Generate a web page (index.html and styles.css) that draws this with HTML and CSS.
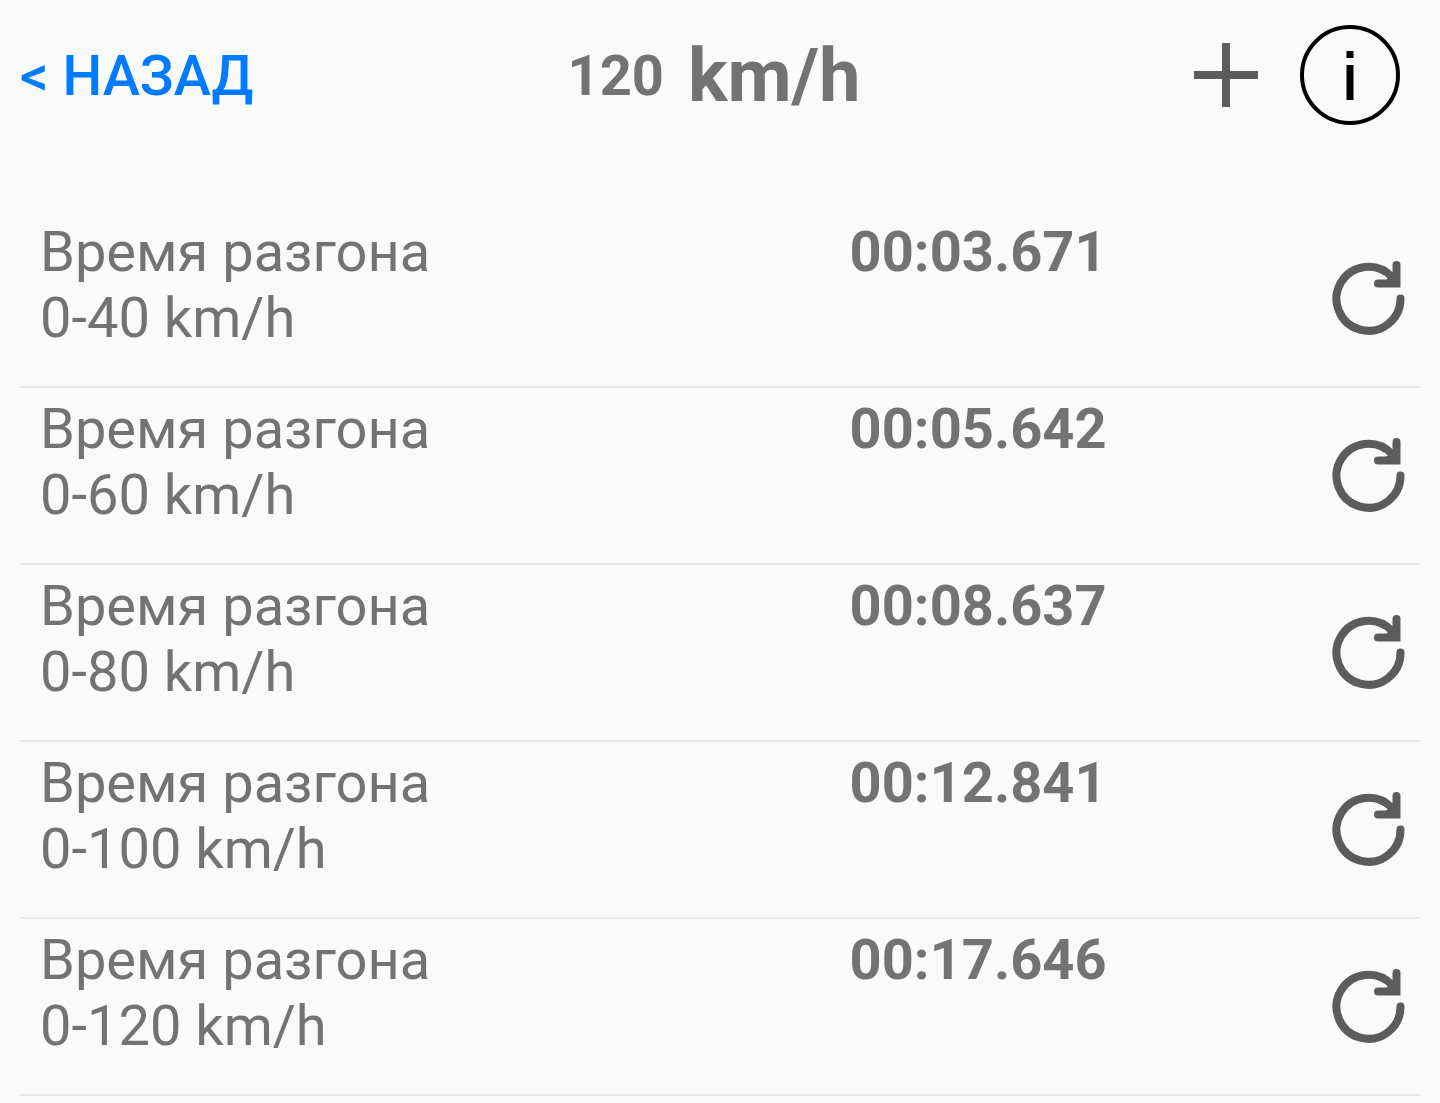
FILE: index.html
```html
<!DOCTYPE html>
<html lang="ru">
<head>
<meta charset="utf-8">
<meta name="viewport" content="width=device-width, initial-scale=1">
<title>120 km/h</title>
<link rel="stylesheet" href="styles.css">
</head>
<body>
<svg class="sprite" aria-hidden="true">
  <symbol id="reload" viewBox="0 0 80 80">
    <path d="M72.500 39.500A32 32 0 1 1 63.500 17.500" fill="none" stroke="currentColor" stroke-width="8" stroke-linecap="round"/>
    <path d="M68.500 6V24.500H50" fill="none" stroke="currentColor" stroke-width="8" stroke-linecap="round"/>
    <path d="M58 21L65 14V21Z" fill="currentColor"/>
  </symbol>
</svg>
<header class="topbar">
  <a class="back" href="#">&lt; НАЗАД</a>
  <h1 class="title"><span class="speed">120</span><span class="unit">km/h</span></h1>
  <div class="actions">
    <button class="icon-button" type="button" aria-label="Добавить"><svg class="plus" viewBox="0 0 64 64"><path d="M32 0V64M0 32H64" stroke="currentColor" stroke-width="8"/></svg></button>
    <button class="icon-button" type="button" aria-label="Информация"><svg class="info" viewBox="0 0 100 100"><circle cx="50" cy="50" r="48" fill="none" stroke="currentColor" stroke-width="4"/><path d="M50 26V33M50 40V75" stroke="currentColor" stroke-width="7"/></svg></button>
  </div>
</header>
<main>
  <ul class="results">
    <li class="row"><p class="label">Время разгона<br>0-40 km/h</p><strong class="time">00:03.671</strong><button class="icon-button retry" type="button" aria-label="Повторить"><svg class="reload"><use href="#reload"/></svg></button></li>
    <li class="row"><p class="label">Время разгона<br>0-60 km/h</p><strong class="time">00:05.642</strong><button class="icon-button retry" type="button" aria-label="Повторить"><svg class="reload"><use href="#reload"/></svg></button></li>
    <li class="row"><p class="label">Время разгона<br>0-80 km/h</p><strong class="time">00:08.637</strong><button class="icon-button retry" type="button" aria-label="Повторить"><svg class="reload"><use href="#reload"/></svg></button></li>
    <li class="row"><p class="label">Время разгона<br>0-100 km/h</p><strong class="time">00:12.841</strong><button class="icon-button retry" type="button" aria-label="Повторить"><svg class="reload"><use href="#reload"/></svg></button></li>
    <li class="row"><p class="label">Время разгона<br>0-120 km/h</p><strong class="time">00:17.646</strong><button class="icon-button retry" type="button" aria-label="Повторить"><svg class="reload"><use href="#reload"/></svg></button></li>
  </ul>
</main>
</body>
</html>
```
FILE: styles.css
```css
* { box-sizing: border-box; }
body {
  margin: 0;
  background: #fafafa;
  color: #737373;
  font-family: Roboto, sans-serif;
  font-size: 56px;
  line-height: 66px;
}
.sprite { display: none; }
.topbar {
  display: grid;
  grid-template-columns: 1fr auto 1fr;
  align-items: center;
  min-height: 150px;
  padding: 0 40px 0 20px;
}
.back { padding-top: 2px; color: #007aff; font-weight: 500; text-decoration: none; }
.title {
  display: flex;
  align-items: center;
  gap: 24px;
  margin: 0;
  padding: 2px 0 0 8px;
  font-size: 56px;
  font-weight: 700;
}
.unit { font-size: 74px; }
.actions { display: flex; justify-content: flex-end; align-items: center; gap: 42px; }
.icon-button { display: block; padding: 0; border: 0; background: none; color: #5c5c5c; }
.icon-button svg { display: block; }
.plus { width: 64px; height: 64px; }
.info { width: 100px; height: 100px; color: #000; }
.results { margin: 0; padding: 61px 20px 0; list-style: none; }
.row {
  display: grid;
  grid-template-columns: 22fr 13fr auto;
  min-height: 177px;
  padding: 8px 12px 0 20px;
  border-bottom: 2px solid #e8e8e8;
}
.label { margin: 0; }
.time { font-weight: 700; }
.retry { align-self: start; padding-top: 40px; }
.reload { width: 80px; height: 80px; }
```
